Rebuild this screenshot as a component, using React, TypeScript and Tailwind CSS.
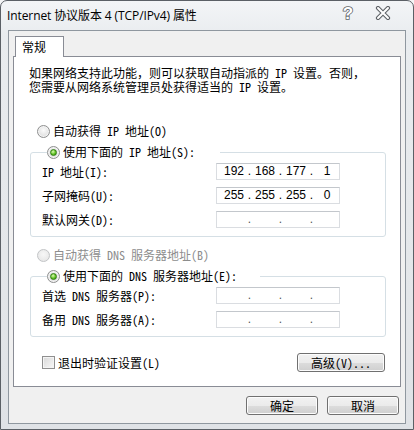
import type { ReactNode } from "react";

const cjk = "font-['Noto_Sans_Mono_CJK_SC','Noto_Sans_CJK_SC',monospace]";

function Radio({ checked, disabled }: { checked?: boolean; disabled?: boolean }) {
  return (
    <span
      className={
        disabled
          ? "flex h-[13px] w-[13px] shrink-0 items-center justify-center rounded-full border border-[#c2c4c6] bg-[radial-gradient(circle_at_50%_40%,#f7f7f7,#e3e3e3)]"
          : "flex h-[13px] w-[13px] shrink-0 items-center justify-center rounded-full border border-[#8e8f8f] bg-[radial-gradient(circle_at_50%_40%,#fbfbfb,#d4d4d4)] shadow-[inset_0_0_0_1px_#f4f4f4]"
      }
    >
      {checked && (
        <span className="h-[7px] w-[7px] rounded-full border border-[#2f7d12] bg-[radial-gradient(circle_at_40%_35%,#d9fbb4,#62c224_55%,#2f8c0d)]" />
      )}
    </span>
  );
}

function RadioRow({ label, checked, disabled }: { label: string; checked?: boolean; disabled?: boolean }) {
  return (
    <div className="flex h-[14px] items-center gap-[3px] leading-[14px]">
      <Radio checked={checked} disabled={disabled} />
      <span className={disabled ? "text-[#8d8d8d]" : "text-black"}>{label}</span>
    </div>
  );
}

function IpBox({ parts }: { parts: string[] }) {
  const cells: ReactNode[] = [];
  parts.forEach((p, i) => {
    cells.push(
      <span key={"n" + i} className="w-[24px] text-center">
        {p}
      </span>
    );
    if (i < 3)
      cells.push(
        <span key={"d" + i} className={p === "" ? "w-[7px] text-center text-[#555]" : "w-[7px] text-center"}>
          .
        </span>
      );
  });
  return (
    <div className="flex h-[17px] w-[124px] items-center border border-[#dadde1] border-t-[#c3c7cc] bg-white pl-[5px] font-['Liberation_Sans',sans-serif] text-[12px] leading-[15px] text-black">
      {cells}
    </div>
  );
}

function Field({ label, parts }: { label: string; parts: string[] }) {
  return (
    <div className="flex h-[17px] items-center">
      <span className="w-[174px] leading-[14px]">{label}</span>
      <IpBox parts={parts} />
    </div>
  );
}

function Group({ legend, legendWidth, children }: { legend: ReactNode; legendWidth: string; children: ReactNode }) {
  return (
    <fieldset className="ml-[16px] mt-[7px] w-[356px] rounded-[3px] border border-[#d5dfe5] pb-[8px] pl-[11px]">
      <legend className={"ml-[5px] " + legendWidth}>{legend}</legend>
      <div className="mt-[4px] flex flex-col gap-[7px]">{children}</div>
    </fieldset>
  );
}

function Button({ children, w }: { children: ReactNode; w: string }) {
  return (
    <button
      className={
        "flex h-[19px] items-center justify-center rounded-[3px] border border-[#707070] bg-[linear-gradient(#f2f2f2_0%,#ebebeb_50%,#dddddd_50%,#cfcfcf_100%)] text-[12px] leading-[14px] text-black shadow-[inset_0_0_0_1px_#fcfcfc] " +
        w
      }
    >
      {children}
    </button>
  );
}

export default function App() {
  const empty = ["", "", "", ""];
  return (
    <div className="h-[430px] w-[414px] overflow-hidden bg-[#f4f5f6]">
      <div className="flex h-[430px] flex-col rounded-t-[7px] border border-[#5b6066] bg-[linear-gradient(180deg,#f3f5f7_0%,#e9ecef_8%,#e4e7ea_60%,#dfe2e6_100%)]">
        <div className="flex h-[29px] items-center justify-between pl-[6px] pr-[22px]">
          <span className="pt-[1px] font-['Open_Sans','Noto_Sans_CJK_SC',sans-serif] text-[12px] leading-[16px] tracking-[-0.1px] text-black">
            Internet 协议版本 4 (TCP/IPv4) 属性
          </span>
          <div className="mb-[6px] flex items-center gap-[20px]">
            <svg width="14" height="18" viewBox="0 0 14 18">
              <text
                x="7"
                y="15"
                textAnchor="middle"
                fontSize="17"
                fontWeight="bold"
                fontFamily="Liberation Sans, sans-serif"
                fill="#ffffff"
                stroke="#5f6368"
                strokeWidth="1.6"
                paintOrder="stroke"
              >
                ?
              </text>
            </svg>
            <svg width="16" height="14" viewBox="0 0 16 14">
              <path d="M3 2 L13 12 M13 2 L3 12" stroke="#5f6368" strokeWidth="4.2" strokeLinecap="round" />
              <path d="M3 2 L13 12 M13 2 L3 12" stroke="#ffffff" strokeWidth="2" strokeLinecap="round" />
            </svg>
          </div>
        </div>

        <div className={"mx-[7px] flex h-[394px] flex-col border border-[#8f979f] bg-[#f0f0f0] text-[12px] text-black " + cjk}>
          <div className="ml-[6px] mt-[5px] relative z-10 -mb-[1px] flex h-[21px] w-[49px] items-start border border-b-0 border-[#898c95] bg-white pl-[6px] pt-[3px] leading-[14px]">
            常规
          </div>
          <div className="ml-[4px] flex h-[331px] w-[388px] flex-col border border-[#898c95] bg-white">
            <p className="mt-[9px] pl-[15px] leading-[14px]">
              如果网络支持此功能，则可以获取自动指派的 IP 设置。否则，
              <br />
              您需要从网络系统管理员处获得适当的 IP 设置。
            </p>

            <div className="mt-[30px] pl-[23px]">
              <RadioRow label="自动获得 IP 地址(O)" />
            </div>
            <Group legendWidth="w-[173px]" legend={<RadioRow label="使用下面的 IP 地址(S):" checked />}>
              <Field label="IP 地址(I):" parts={["192", "168", "177", "1"]} />
              <Field label="子网掩码(U):" parts={["255", "255", "255", "0"]} />
              <Field label="默认网关(D):" parts={empty} />
            </Group>

            <div className="mt-[11px] pl-[23px]">
              <RadioRow label="自动获得 DNS 服务器地址(B)" disabled />
            </div>
            <Group legendWidth="w-[213px]" legend={<RadioRow label="使用下面的 DNS 服务器地址(E):" checked />}>
              <Field label="首选 DNS 服务器(P):" parts={empty} />
              <Field label="备用 DNS 服务器(A):" parts={empty} />
            </Group>

            <div className="mt-[16px] flex items-center justify-between pl-[28px] pr-[15px]">
              <div className="flex items-center gap-[3px] leading-[14px]">
                <span className="h-[13px] w-[13px] border border-[#8f8f8f] bg-[linear-gradient(135deg,#d8d8d8,#f8f8f8)] shadow-[inset_0_0_0_1px_#f4f4f4]" />
                <span>退出时验证设置(L)</span>
              </div>
              <Button w="w-[88px]">高级(V)...</Button>
            </div>
          </div>

          <div className="mt-[9px] flex justify-end gap-[9px] pr-[6px]">
            <Button w="w-[72px]">确定</Button>
            <Button w="w-[72px]">取消</Button>
          </div>
        </div>
      </div>
    </div>
  );
}
